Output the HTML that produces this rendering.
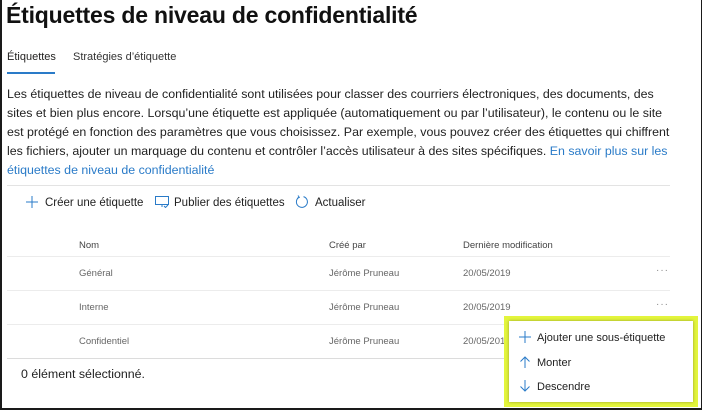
<!DOCTYPE html>
<html><head><meta charset="utf-8"><style>
*{margin:0;padding:0;box-sizing:border-box}
body{width:702px;height:410px;overflow:hidden;background:#fff;font-family:"Liberation Sans","DejaVu Sans",sans-serif;color:#201f1e;position:relative}
.frame{position:absolute;left:0;top:0;width:702px;height:410px;border:2px solid #1a1a1a;border-top:none;border-right:1px solid #1a1a1a}
.abs{position:absolute;white-space:nowrap}
h1{position:absolute;left:6px;top:2px;font-size:23px;font-weight:bold;letter-spacing:-0.2px;color:#111}
.p{position:absolute;left:7px;top:85px;width:673px;font-size:12.4px;line-height:19px;color:#222}
.p a{color:#2a7bc8;text-decoration:none}
.hr{position:absolute;height:1px;background:#e3e3e3}
.tb{font-size:11.5px;color:#222}
.th{font-size:9.5px;color:#444}
.td{font-size:9.5px;color:#666}
.dots{font-size:10px;color:#888;letter-spacing:1px}
.menu{position:absolute;left:504px;top:316px;width:194px;height:91px;border:3px solid #e3f53c;background:#e3f53c}
.menu .in{position:absolute;left:2px;top:2px;right:2px;bottom:2px;background:#fff;box-shadow:0 0 3px rgba(0,0,0,.35)}
.mi{position:absolute;left:28px;font-size:11px;color:#222}
</style></head><body>
<h1>Étiquettes de niveau de confidentialité</h1>
<div class="abs" style="left:7px;top:51px;font-size:11px">Étiquettes</div>
<div class="abs" style="left:73px;top:51px;font-size:11px;color:#333">Stratégies d’étiquette</div>
<div class="abs" style="left:7px;top:72px;width:48px;height:2px;background:#2a7bc8"></div>
<div class="p">Les étiquettes de niveau de confidentialité sont utilisées pour classer des courriers électroniques, des documents, des sites et bien plus encore. Lorsqu’une étiquette est appliquée (automatiquement ou par l’utilisateur), le contenu ou le site est protégé en fonction des paramètres que vous choisissez. Par exemple, vous pouvez créer des étiquettes qui chiffrent les fichiers, ajouter un marquage du contenu et contrôler l’accès utilisateur à des sites spécifiques. <a>En savoir plus sur les étiquettes de niveau de confidentialité</a></div>
<div class="hr" style="left:7px;top:185px;width:663px"></div>
<svg class="abs" style="left:26px;top:196px" width="12" height="12" viewBox="0 0 12 12"><path d="M6 0V12M0 6H12" stroke="#2a7bc8" stroke-width="1"/></svg>
<div class="abs tb" style="left:45px;top:197px">Créer une étiquette</div>
<svg class="abs" style="left:155px;top:196px" width="14" height="12" viewBox="0 0 14 12"><rect x="0.5" y="0.5" width="13" height="8" fill="none" stroke="#2a7bc8"/><path d="M7 9v2M9 10l1.5 1.5L13 9" stroke="#2a7bc8" fill="none"/></svg>
<div class="abs tb" style="left:174px;top:197px">Publier des étiquettes</div>
<svg class="abs" style="left:295px;top:195px" width="14" height="14" viewBox="0 0 14 14"><path d="M4 2.2A5.5 5.5 0 1 0 8.5 1.6" stroke="#2a7bc8" fill="none"/><path d="M3 0.5L4.3 2.4 2.2 3.3" stroke="#2a7bc8" fill="none"/></svg>
<div class="abs tb" style="left:315px;top:197px">Actualiser</div>
<div class="abs th" style="left:79px;top:240px">Nom</div>
<div class="abs th" style="left:329px;top:240px">Créé par</div>
<div class="abs th" style="left:463px;top:240px">Dernière modification</div>
<div class="hr" style="left:7px;top:256px;width:663px;background:#ececec"></div>
<div class="abs td" style="left:79px;top:268px">Général</div>
<div class="abs td" style="left:329px;top:268px">Jérôme Pruneau</div>
<div class="abs td" style="left:463px;top:268px">20/05/2019</div>
<div class="abs dots" style="left:656px;top:265px">···</div>
<div class="hr" style="left:7px;top:290px;width:663px;background:#ececec"></div>
<div class="abs td" style="left:79px;top:302px">Interne</div>
<div class="abs td" style="left:329px;top:302px">Jérôme Pruneau</div>
<div class="abs td" style="left:463px;top:302px">20/05/2019</div>
<div class="abs dots" style="left:656px;top:299px">···</div>
<div class="hr" style="left:7px;top:324px;width:663px;background:#ececec"></div>
<div class="abs td" style="left:79px;top:336px">Confidentiel</div>
<div class="abs td" style="left:329px;top:336px">Jérôme Pruneau</div>
<div class="abs td" style="left:463px;top:336px">20/05/2019</div>
<div class="hr" style="left:7px;top:358px;width:663px;background:#dcdcdc"></div>
<div class="abs" style="left:21px;top:367px;font-size:12.4px;color:#222">0 élément sélectionné.</div>
<div class="menu"><div class="in">
<svg class="abs" style="left:10px;top:10px" width="12" height="12" viewBox="0 0 12 12"><path d="M6 0V12M0 6H12" stroke="#2a7bc8"/></svg>
<div class="mi" style="top:11px">Ajouter une sous-étiquette</div>
<svg class="abs" style="left:10px;top:35px" width="12" height="12" viewBox="0 0 12 12"><path d="M6 12V1M1.5 5.5L6 1l4.5 4.5" stroke="#2a7bc8" fill="none"/></svg>
<div class="mi" style="top:36px">Monter</div>
<svg class="abs" style="left:10px;top:59px" width="12" height="12" viewBox="0 0 12 12"><path d="M6 0V11M1.5 6.5L6 11l4.5-4.5" stroke="#2a7bc8" fill="none"/></svg>
<div class="mi" style="top:60px">Descendre</div>
</div></div>
<div class="frame"></div>
</body></html>
